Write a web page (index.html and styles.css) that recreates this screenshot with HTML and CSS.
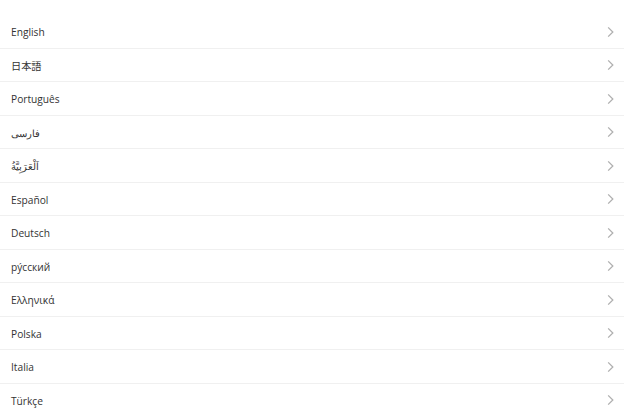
FILE: index.html
```html
<!DOCTYPE html>
<html lang="en">
<head>
    <meta charset="UTF-8">
    <meta name="viewport" content="width=device-width, initial-scale=1.0">
    <title>Language</title>
    <link rel="stylesheet" href="styles.css">
</head>
<body>
    <ul class="lang-list">
        <li class="lang-item"><span>English</span><svg class="chevron" viewBox="0 0 6 10"><path d="M1 1l4 4-4 4"/></svg></li>
        <li class="lang-item"><span lang="ja">日本語</span><svg class="chevron" viewBox="0 0 6 10"><path d="M1 1l4 4-4 4"/></svg></li>
        <li class="lang-item"><span>Português</span><svg class="chevron" viewBox="0 0 6 10"><path d="M1 1l4 4-4 4"/></svg></li>
        <li class="lang-item"><span lang="fa">فارسی</span><svg class="chevron" viewBox="0 0 6 10"><path d="M1 1l4 4-4 4"/></svg></li>
        <li class="lang-item"><span lang="ar">اَلْعَرَبِيَّةُ</span><svg class="chevron" viewBox="0 0 6 10"><path d="M1 1l4 4-4 4"/></svg></li>
        <li class="lang-item"><span>Español</span><svg class="chevron" viewBox="0 0 6 10"><path d="M1 1l4 4-4 4"/></svg></li>
        <li class="lang-item"><span>Deutsch</span><svg class="chevron" viewBox="0 0 6 10"><path d="M1 1l4 4-4 4"/></svg></li>
        <li class="lang-item"><span>рýсский</span><svg class="chevron" viewBox="0 0 6 10"><path d="M1 1l4 4-4 4"/></svg></li>
        <li class="lang-item"><span>Ελληνικά</span><svg class="chevron" viewBox="0 0 6 10"><path d="M1 1l4 4-4 4"/></svg></li>
        <li class="lang-item"><span>Polska</span><svg class="chevron" viewBox="0 0 6 10"><path d="M1 1l4 4-4 4"/></svg></li>
        <li class="lang-item"><span>Italia</span><svg class="chevron" viewBox="0 0 6 10"><path d="M1 1l4 4-4 4"/></svg></li>
        <li class="lang-item"><span>Türkçe</span><svg class="chevron" viewBox="0 0 6 10"><path d="M1 1l4 4-4 4"/></svg></li>
    </ul>
</body>
</html>
```

FILE: styles.css
```css
body {
    margin: 0;
    padding: 0;
    background: #ffffff;
    font-family: "Open Sans", "Noto Sans", "Noto Sans CJK JP", sans-serif;
    color: #333;
}
.lang-list {
    list-style: none;
    margin: 0;
    padding: 15px 0 0 0;
}
.lang-item {
    display: flex;
    align-items: center;
    justify-content: space-between;
    height: 32.5px;
    padding: 0 11px;
    border-bottom: 1px solid #f0f0f0;
    font-size: 10.2px;
}
.lang-item span {
    padding-top: 2px;
}
.chevron {
    width: 7px;
    height: 12px;
    margin-top: 1px;
    margin-right: -1px;
    fill: none;
    stroke: #b0b0b0;
    stroke-width: 1.1;
}
```
